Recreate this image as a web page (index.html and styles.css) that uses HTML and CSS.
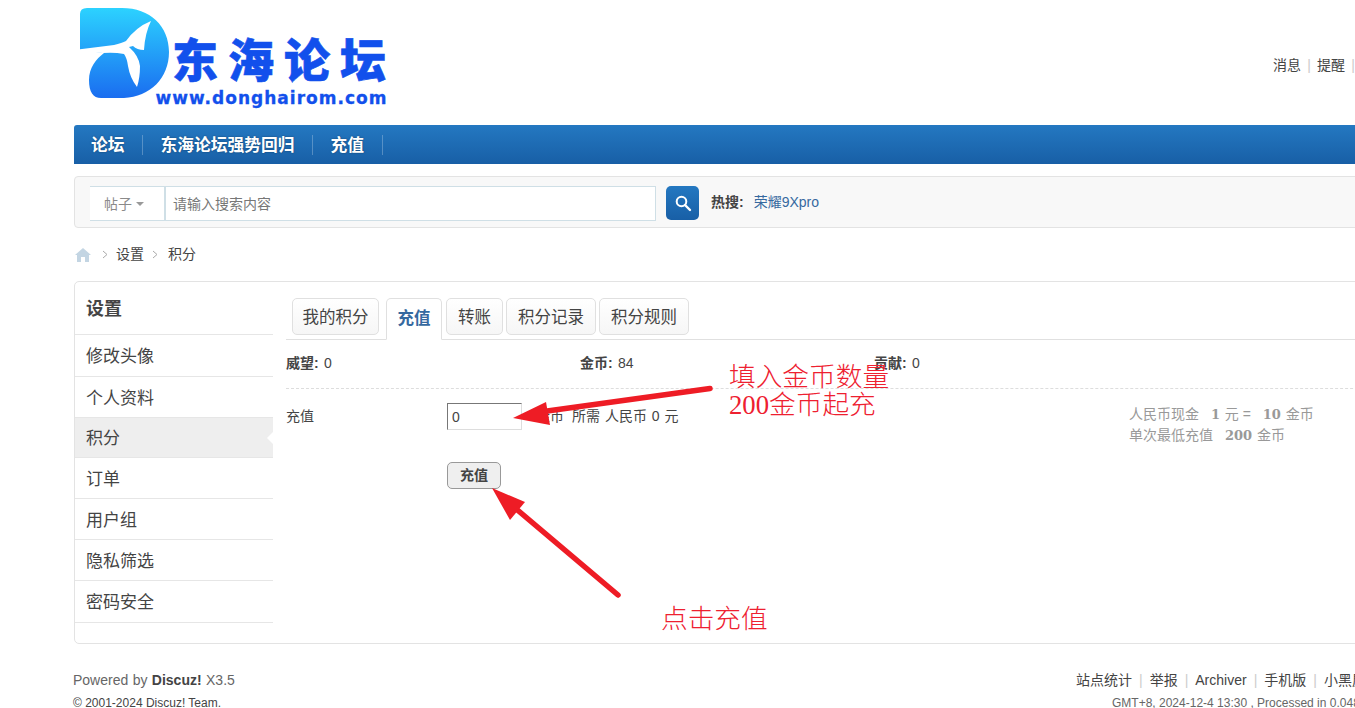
FILE: index.html
```html
<!DOCTYPE html>
<html lang="zh-CN">
<head>
<meta charset="utf-8">
<title>积分 - 东海论坛</title>
<link rel="stylesheet" href="styles.css">
</head>
<body>
<div class="page">
  <header class="top">
    <svg class="logo" width="320" height="110" viewBox="0 0 320 110">
      <defs>
        <linearGradient id="dgrad" x1="0" y1="0" x2="0" y2="1">
          <stop offset="0" stop-color="#2cd2ff"/>
          <stop offset="1" stop-color="#1a6df0"/>
        </linearGradient>
      </defs>
      <path fill="url(#dgrad)" d="M6 14Q6 8 13 8L48 8C76 8 95 26 95 52C95 78 76 97 50 98L27 98C19 98 15 92 15 80C15 68 22 59 30 53L6 50Z"/>
      <path fill="#fff" d="M4 49.500L40 45Q48 43 52 41Q62 27 77 21Q71 33 70 50Q63 50 59 46L55 47Q65 56 66 66Q66 78 63 87Q56 78 54 66Q53 58 50 54Q40 52 29 53Q15 52 4 51Z"/>
      <text class="logo-cn" x="98" y="77" textLength="214" lengthAdjust="spacing">东海论坛</text>
      <text class="logo-url" x="81.500" y="104" textLength="231" lengthAdjust="spacing">www.donghairom.com</text>
    </svg>
    <nav class="usernav">
      <a>消息</a><span class="pipe">|</span><a>提醒</a><span class="pipe">|</span>
    </nav>
  </header>

  <nav class="mainnav">
    <a>论坛</a><a>东海论坛强势回归</a><a>充值</a>
  </nav>

  <section class="searchbar">
    <div class="searchbox">
      <div class="scope">帖子<i class="caret"></i></div>
      <div class="query">请输入搜索内容</div>
    </div>
    <button class="searchbtn" type="button" aria-label="搜索">
      <svg width="18" height="18" viewBox="0 0 18 18" fill="none" stroke="#fff">
        <circle cx="7.500" cy="7.500" r="4.800" stroke-width="2"/>
        <path d="M11 11L16 16" stroke-width="2.400" stroke-linecap="round"/>
      </svg>
    </button>
    <strong class="hot-label">热搜:</strong>
    <a class="hot-link">荣耀9Xpro</a>
  </section>

  <div class="crumbs">
    <svg class="home" width="16" height="14" viewBox="0 0 16 14">
      <path fill="#c3d5e3" d="M8 0L16 7L14 7L14 14L10 14L10 9L6 9L6 14L2 14L2 7L0 7Z"/>
    </svg>
    <svg class="chev" width="6" height="9" viewBox="0 0 6 9" fill="none" stroke="#aaa"><path d="M1 1L5 4.500L1 8"/></svg>
    <a>设置</a>
    <svg class="chev" width="6" height="9" viewBox="0 0 6 9" fill="none" stroke="#aaa"><path d="M1 1L5 4.500L1 8"/></svg>
    <a>积分</a>
  </div>

  <main class="card">
    <aside class="side">
      <h2 class="side-title">设置</h2>
      <ul class="side-list">
        <li>修改头像</li>
        <li>个人资料</li>
        <li class="current">积分</li>
        <li>订单</li>
        <li>用户组</li>
        <li>隐私筛选</li>
        <li>密码安全</li>
      </ul>
    </aside>
    <div class="content">
      <div class="tabs">
        <a class="tab t1">我的积分</a>
        <a class="tab active">充值</a>
        <a class="tab t2">转账</a>
        <a class="tab t3">积分记录</a>
        <a class="tab t3">积分规则</a>
      </div>
      <div class="stats">
        <div class="stat"><b>威望:</b> 0</div>
        <div class="stat"><b>金币:</b> 84</div>
        <div class="stat"><b>贡献:</b> 0</div>
      </div>
      <form class="form">
        <div class="form-row">
          <label class="form-label">充值</label>
          <input class="amount" type="text" value="0">
          <span class="unit">金币</span>
          <span class="need">所需 人民币 0 元</span>
          <div class="rate">
            <div>人民币现金 <b class="num">1</b> 元 = <b class="num">10</b> 金币</div>
            <div>单次最低充值 <b class="num">200</b> 金币</div>
          </div>
        </div>
        <button class="submit" type="button">充值</button>
      </form>
    </div>
  </main>

  <footer class="foot">
    <div class="foot-left">
      <div class="powered">Powered by <b>Discuz!</b> X3.5</div>
      <div class="copy">© 2001-2024 Discuz! Team.</div>
    </div>
    <div class="foot-right">
      <div class="foot-links"><a>站点统计</a><span class="pipe">|</span><a>举报</a><span class="pipe">|</span><a>Archiver</a><span class="pipe">|</span><a>手机版</a><span class="pipe">|</span><a>小黑屋</a></div>
      <div class="foot-time">GMT+8, 2024-12-4 13:30 , Processed in 0.048 second(s), 12 queries .</div>
    </div>
  </footer>
</div>

<svg class="marks" width="1355" height="708" viewBox="0 0 1355 708">
  <path class="mark-line" d="M710 388.500L540 412"/>
  <path class="mark-head" d="M513 418L546 402L550 425Z"/>
  <path class="mark-line" d="M618 595L515 508"/>
  <path class="mark-head" d="M492 488L525 502L510 520Z"/>
</svg>
<div class="note note-a">填入金币数量<br>200金币起充</div>
<div class="note note-b">点击充值</div>
</body>
</html>
```
FILE: styles.css
```css
* { box-sizing: border-box; }
html, body { margin: 0; height: 708px; overflow: hidden; background: #fff; }
body {
  position: relative;
  width: 1355px;
  font: 14px/1.4 "Liberation Sans", "Noto Sans CJK SC", sans-serif;
  color: #444;
}
.page { width: 1400px; margin-left: 74px; }
a { color: inherit; text-decoration: none; }

.top { height: 125px; display: flex; align-items: flex-start; }
.logo { display: block; flex: none; }
.logo-cn { font: 900 46px "Noto Sans CJK SC", sans-serif; fill: #1250ec; stroke: #1250ec; stroke-width: .6px; }
.logo-url { font: 700 17px "DejaVu Sans", sans-serif; fill: #1250ec; stroke: #1250ec; stroke-width: .3px; }
.usernav { margin: 56px 0 0 879px; display: flex; white-space: nowrap; }
.usernav a { width: 28px; }
.pipe { color: #ccc; }
.usernav .pipe { width: 16px; text-align: center; }

.mainnav {
  height: 39px;
  display: flex;
  align-items: center;
  background: linear-gradient(#2478c1, #185fa6);
  border-radius: 3px 0 0 0;
}
.mainnav a {
  padding: 0 17.500px;
  height: 20px;
  line-height: 22px;
  font-size: 16.750px;
  font-weight: 700;
  color: #fff;
  text-shadow: 0 0 2px rgba(0,0,0,.4);
  border-right: 1px solid rgba(255,255,255,.25);
}
.mainnav a:first-child { padding-left: 17px; }

.searchbar {
  height: 52px;
  margin-top: 12px;
  padding: 9px 0 0 15px;
  display: flex;
  align-items: flex-start;
  background: #f8f8f8;
  border: 1px solid #e3e3e3;
  border-radius: 4px 0 0 4px;
}
.searchbox {
  width: 566px;
  height: 35px;
  display: flex;
  background: #fff;
  border: 1px solid #cfdfe6;
  border-left: 0;
}
.scope {
  width: 76px;
  padding-left: 14px;
  line-height: 35px;
  color: #8a8a8a;
  border-right: 2px solid #cfdfe6;
}
.caret {
  display: inline-block;
  margin-left: 4px;
  vertical-align: 3px;
  border: 4px solid transparent;
  border-top-color: #999;
  border-bottom: 0;
}
.query { padding-left: 7px; line-height: 35px; color: #777; }
.searchbtn {
  width: 33px;
  height: 34px;
  margin-left: 10px;
  padding: 0;
  border: 0;
  border-radius: 5px;
  background: linear-gradient(#2478c1, #185fa6);
  display: flex;
  align-items: center;
  justify-content: center;
}
.hot-label { margin-left: 12px; line-height: 33px; color: #444; }
.hot-link { margin-left: 10px; line-height: 33px; color: #36699f; }

.crumbs { height: 53px; display: flex; align-items: center; color: #444; }
.home { margin: 0 0 0 1px; }
.chev { margin: 0 8px 0 11px; }
.crumbs a + .chev { margin: 0 10px 0 8px; }

.card {
  height: 363px;
  display: flex;
  border: 1px solid #e3e3e3;
  border-radius: 5px 0 0 5px;
}
.side { width: 198px; flex: none; }
.side-title {
  margin: 0;
  height: 53px;
  padding: 0 11px;
  font-size: 18px;
  line-height: 54px;
  font-weight: 700;
  color: #444;
  border-bottom: 1px solid #e6e6e6;
}
.side-list { list-style: none; margin: 0; padding: 0; }
.side-list li {
  position: relative;
  height: 41px;
  padding: 0 11px;
  font-size: 17px;
  line-height: 43px;
  color: #444;
  border-bottom: 1px solid #e6e6e6;
}
.side-list li:first-child, .side-list li:last-child { height: 42px; }
.side-list .current { background: #eee; height: 40px; line-height: 42px; }
.side-list .current::after {
  content: "";
  position: absolute;
  right: -1px;
  top: 13px;
  border: 7px solid transparent;
  border-right-color: #fff;
  border-left: 0;
}

.content { flex: 1; padding-top: 16px; margin-left: 13px; }
.tabs { display: flex; height: 42px; border-bottom: 1px solid #e0e0e0; padding-left: 6px; align-items: flex-start; }
.tab {
  height: 37px;
  margin-right: 3px;
  text-align: center;
  font-size: 16.500px;
  line-height: 37px;
  color: #444;
  background: linear-gradient(#fff, #f6f6f6);
  border: 1px solid #e0e0e0;
  border-radius: 5px;
}
.t1 { width: 87px; margin-right: 7px; }
.t2 { width: 57px; }
.t3 { width: 90px; }
.active {
  width: 56px;
  height: 42px;
  margin-right: 4px;
  font-weight: 700;
  color: #36699f;
  background: #fff;
  border-bottom: 1px solid #fff;
  border-radius: 5px 5px 0 0;
  line-height: 38px;
}
.stats { display: flex; height: 49px; line-height: 47px; border-bottom: 1px dashed #ddd; word-spacing: 1.500px; }
.stat { width: 294px; color: #444; }
.stat b { color: #444; }

.form { padding-top: 14px; }
.form-row { display: flex; align-items: center; height: 27px; }
.form-label { width: 161px; flex: none; }
.amount {
  width: 75px;
  height: 27px;
  padding: 0 4px;
  font: 14px "Liberation Sans", sans-serif;
  color: #444;
  border: 1px solid #ddd;
  border-top-color: #777;
  border-left-color: #777;
  background: #fff;
  outline: 0;
}
.unit { margin-left: 14px; width: 36px; flex: none; }
.need { width: 557px; flex: none; word-spacing: 1px; }
.rate { color: #999; line-height: 21px; margin-top: 17px; white-space: nowrap; }
.num { font: 700 13px "DejaVu Serif", serif; margin: 0 1px 0 8px; color: #999; }
.submit {
  display: block;
  width: 54px;
  height: 27px;
  margin: 32px 0 0 161px;
  padding: 0 0 3px;
  font: 700 14px "Liberation Sans", "Noto Sans CJK SC", sans-serif;
  color: #444;
  background: #efefef;
  border: 1px solid #999;
  border-radius: 5px;
}

.foot { display: flex; padding-top: 26px; }
.foot-left { width: 1002px; flex: none; margin-left: -1px; }
.foot-right { margin-left: 1px; }
.powered { font-size: 14px; color: #666; line-height: 20px; word-spacing: .5px; }
.powered b { color: #444; }
.copy { font-size: 12px; line-height: 18px; margin-top: 4px; color: #444; }
.foot-links { font-size: 14px; line-height: 20px; white-space: nowrap; color: #444; }
.foot-links .pipe { margin: 0 7px; }
.foot-time { font-size: 12px; line-height: 18px; margin: 4px 0 0 36px; color: #666; white-space: nowrap; }

.marks { position: absolute; left: 0; top: 0; pointer-events: none; }
.mark-line { fill: none; stroke: #ee1c25; stroke-width: 5.500; stroke-linecap: round; }
.mark-head { fill: #ee1c25; }
.note {
  position: absolute;
  color: #ee2030;
  font: 300 26.700px/27.500px "Liberation Serif", "Noto Sans CJK SC", serif;
  white-space: nowrap;
}
.note-a { left: 729px; top: 364px; }
.note-b { left: 661px; top: 606px; }
```
